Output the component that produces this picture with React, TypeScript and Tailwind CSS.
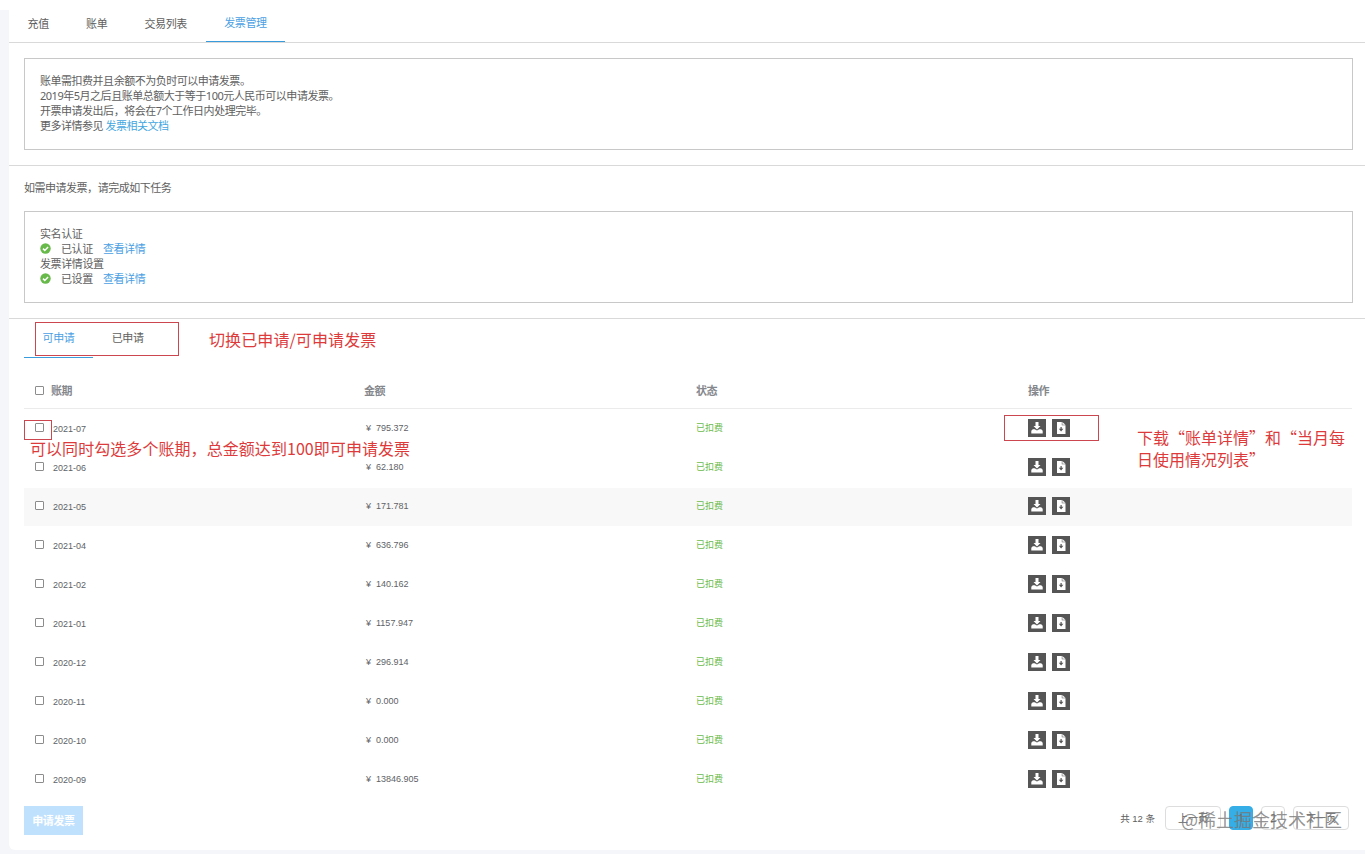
import React from 'react';

interface Bill {
  period: string;
  amount: string;
}

const bills: Bill[] = [
  { period: '2021-07', amount: '795.372' },
  { period: '2021-06', amount: '62.180' },
  { period: '2021-05', amount: '171.781' },
  { period: '2021-04', amount: '636.796' },
  { period: '2021-02', amount: '140.162' },
  { period: '2021-01', amount: '1157.947' },
  { period: '2020-12', amount: '296.914' },
  { period: '2020-11', amount: '0.000' },
  { period: '2020-10', amount: '0.000' },
  { period: '2020-09', amount: '13846.905' },
];

const tabs = ['充值', '账单', '交易列表', '发票管理'];

const DownloadIcon = () => (
  <svg className="block size-[18px]" viewBox="0 0 18 18" fill="#fff">
    <path d="M7.500 3h3v4h2L9 10.500 5.500 7h2z" />
    <path d="M3.300 14.500v-2.800l1.500-1.500h1.900L9 11.500l2.300-1.300h1.900l1.500 1.500v2.800z" />
  </svg>
);

const FileIcon = () => (
  <svg className="block size-[18px]" viewBox="0 0 18 18">
    <path d="M5 3h4.800v3.200h3.700V15H5z" fill="#fff" />
    <path d="M10.300 3l3.200 2.700h-3.200z" fill="#fff" />
    <path d="M8.500 8h1.200v1.800h1.700l-2.300 2.600-2.300-2.600h1.700z" fill="#555" />
  </svg>
);

const CheckIcon = () => (
  <svg className="mr-[10px] size-[11px]" viewBox="0 0 11 11">
    <circle cx="5.5" cy="5.5" r="5.2" fill="#67b94a" />
    <path d="M3 5.600l1.800 1.800L8.100 4" fill="none" stroke="#fff" strokeWidth="1.500" />
  </svg>
);

const Checkbox = () => (
  <span className="size-[9px] shrink-0 rounded-[1px] border border-[#8c8c8c] bg-white" />
);

const TaskRow = ({ label }: { label: string }) => (
  <div className="flex h-[15px] items-center">
    <CheckIcon />
    <span>{label}</span>
    <a className="ml-[10px] text-[#4b9fe3]">查看详情</a>
  </div>
);

const BillRow = ({ bill, active }: { bill: Bill; active: boolean }) => (
  <div
    className={`grid h-[39px] grid-cols-4 items-center border-t border-white font-['Liberation_Sans','Noto_Sans_CJK_SC',sans-serif] text-[9px] tracking-normal text-[#606266] ${
      active ? 'bg-[#f8f8f8]' : ''
    }`}
  >
    <div className="flex items-center pl-[11px]">
      <span className="flex pb-[3px]"><Checkbox /></span>
      <span className="ml-[9px]">{bill.period}</span>
    </div>
    <div className="pb-px pl-[10px] whitespace-pre">¥{'  '}{bill.amount}</div>
    <div className="pb-px pl-2 text-[#6cbb4c]">已扣费</div>
    <div className="flex gap-[6px] pb-[2px] pl-2">
      <span className="bg-[#555]"><DownloadIcon /></span>
      <span className="bg-[#555]"><FileIcon /></span>
    </div>
  </div>
);

const PageButton = ({ label, className }: { label: string; className: string }) => (
  <button className={`flex h-6 items-center justify-center rounded border text-[10px] ${className}`}>
    {label}
  </button>
);

const App: React.FC = () => {
  return (
    <div className="relative h-[854px] w-[1365px] overflow-hidden bg-[#f5f6fa] pl-[9px] font-['Noto_Sans','Noto_Sans_CJK_SC',sans-serif] text-[11px] leading-[15px] tracking-[-0.38px] text-[#606060]">
      <div className="-ml-[9px] h-[10px] bg-white" />
      <div className="h-[840px] rounded-bl-md bg-white">
        <nav className="flex h-[33px] border-b border-[#d9d9d9]">
          {tabs.map((tab) => (
            <div
              key={tab}
              className={`h-[32px] px-[18.6px] ${
                tab === '发票管理' ? 'border-b border-[#3a9bdc] pt-[5px] text-[#4b9fe3]' : 'pt-[6px]'
              }`}
            >
              {tab}
            </div>
          ))}
        </nav>

        <section className="border-b border-[#d9d9d9] py-[15px] pr-3 pl-[15px] tracking-[-0.48px]">
          <div className="h-[92px] border border-[#c8c8c8] px-[15px] pt-[14px]">
            <p>账单需扣费并且余额不为负时可以申请发票。</p>
            <p>2019年5月之后且账单总额大于等于100元人民币可以申请发票。</p>
            <p>开票申请发出后，将会在7个工作日内处理完毕。</p>
            <p>
              更多详情参见 <a className="text-[#42a6e0]">发票相关文档</a>
            </p>
          </div>
        </section>

        <section className="border-b border-[#d9d9d9] pt-[14px] pr-3 pb-[15px] pl-[15px]">
          <p className="tracking-[-0.48px]">如需申请发票，请完成如下任务</p>
          <div className="mt-[16px] h-[92px] border border-[#c8c8c8] px-[15px] pt-[14px]">
            <p>实名认证</p>
            <TaskRow label="已认证" />
            <p>发票详情设置</p>
            <TaskRow label="已设置" />
          </div>
        </section>

        <section className="w-[1343px] pl-[15px]">
          <div className="flex h-[39px] leading-[38px]">
            <div className="h-[39px] border-b border-[#3a9bdc] px-[18.6px] text-[#4b9fe3]">可申请</div>
            <div className="px-[18.6px]">已申请</div>
          </div>

          <div className="grid h-[51px] grid-cols-4 items-end border-b border-[#ebebeb] pb-[10px] font-bold text-[#85888d]">
            <div className="flex items-center gap-[7px] pl-[11px]">
              <Checkbox />
              账期
            </div>
            <div className="pl-2">金额</div>
            <div className="pl-2">状态</div>
            <div className="pl-2">操作</div>
          </div>

          {bills.map((bill) => (
            <BillRow key={bill.period} bill={bill} active={bill.period === '2021-05'} />
          ))}

          <footer className="flex items-start justify-between pt-[7px]">
            <button className="h-[29px] w-[59px] bg-[#c0e1fe] font-bold text-white">申请发票</button>
            <div className="mr-[3px] flex items-center gap-2 tracking-normal">
              <span className="mr-[2px] font-['Liberation_Sans','Noto_Sans_CJK_SC',sans-serif] text-[9.5px]">
                共 12 条
              </span>
              <PageButton label="上一页" className="w-14 border-[#ddd]" />
              <PageButton label="1" className="w-6 border-[#35aee8] bg-[#35aee8]" />
              <PageButton label="2" className="w-6 border-[#ddd]" />
              <PageButton label="下一页" className="w-14 border-[#ddd]" />
            </div>
          </footer>
        </section>
      </div>

      {/* Annotations over the page */}
      <div className="pointer-events-none absolute inset-0 font-['Noto_Sans_CJK_SC',sans-serif] text-[16px] leading-[22px] tracking-normal text-[#dd3b3b]">
        <div className="absolute top-[322px] left-[35px] h-[34px] w-[144px] border border-[#cc4650]" />
        <div className="absolute top-[420px] left-[24px] h-[20px] w-[28px] border border-[#cc4650]" />
        <div className="absolute top-[415px] left-[1004px] h-[26px] w-[95px] border border-[#cc4650]" />
        <p className="absolute top-[328px] left-[209px] tracking-[0.1px] whitespace-nowrap">
          切换已申请/可申请发票
        </p>
        <p className="absolute top-[437px] left-[30px] tracking-[0.06px] whitespace-nowrap">
          可以同时勾选多个账期，总金额达到100即可申请发票
        </p>
        <p className="absolute top-[426px] left-[1137px] w-[212px]">下载“账单详情”和“当月每日使用情况列表”</p>
        <p className="absolute top-[808px] left-[1181px] text-[18px] whitespace-nowrap text-[#777]/80">
          @稀土掘金技术社区
        </p>
      </div>
    </div>
  );
};

export default App;
